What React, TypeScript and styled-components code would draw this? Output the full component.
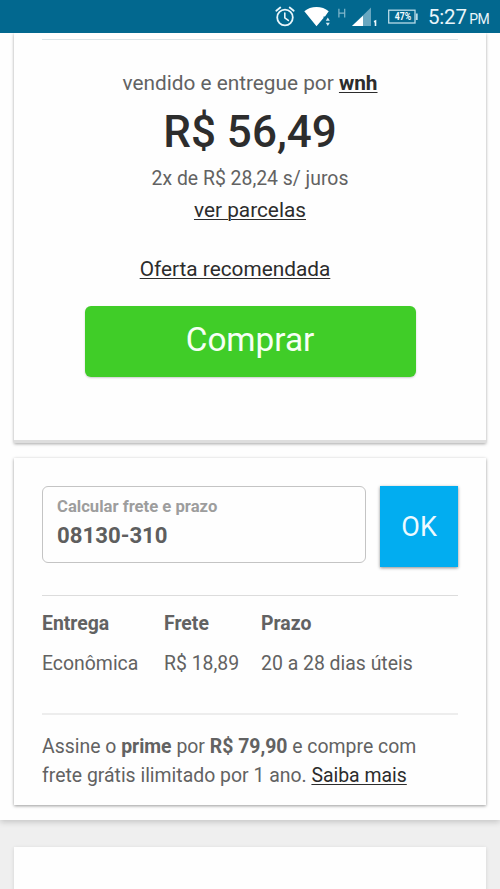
import React from 'react';
import styled, { createGlobalStyle } from 'styled-components';

const GlobalStyle = createGlobalStyle`
  *, *::before, *::after { box-sizing: border-box; }
  body {
    margin: 0;
    background: #efefef;
    font-family: Roboto, sans-serif;
    color: #626262;
    overflow: hidden;
  }
`;

const Screen = styled.div`
  width: 500px;
  height: 889px;
  display: flex;
  flex-direction: column;
  overflow: hidden;
`;

const StatusBar = styled.header`
  position: relative;
  z-index: 1;
  flex: none;
  height: 33px;
  background: #02688f;
  color: #e9f5fa;
  display: flex;
  justify-content: flex-end;
  align-items: flex-start;
  padding-right: 11px;
`;

const StatusIcons = styled.svg`
  display: block;
  width: 168px;
  height: 33px;
`;

const Clock = styled.div`
  font-size: 20.5px;
  line-height: 35px;
  width: 61px;
  white-space: nowrap;
  letter-spacing: -0.2px;
  small { font-size: 14px; margin-left: 2.5px; letter-spacing: -0.5px; }
`;

const Sheet = styled.main`
  flex: none;
  height: 787px;
  padding: 0 14px;
  background: #fefefe;
  box-shadow: 0 2px 6px rgba(0, 0, 0, 0.18);
`;

const OfferCard = styled.section`
  height: 410px;
  background: #fefefe;
  border-bottom: 3px solid #dedede;
  box-shadow: 0 1px 3px rgba(0, 0, 0, 0.35);
  padding: 6px 28px 0;
  display: flex;
  flex-direction: column;
  align-items: center;
`;

const ShippingCard = styled.section`
  height: 347px;
  margin-top: 15px;
  background: #fefefe;
  box-shadow: 0 1px 3px rgba(0, 0, 0, 0.4);
  padding: 28px 28px 0;
`;

const NextCard = styled.section`
  flex: none;
  height: 60px;
  margin: 27px 14px 0;
  background: #fefefe;
  box-shadow: 0 1px 4px rgba(0, 0, 0, 0.12);
`;

const Divider = styled.hr<{ $tone?: string; $size?: number; $gap?: number }>`
  align-self: stretch;
  margin: ${p => p.$gap ?? 0}px 0 0;
  border: 0;
  height: ${p => p.$size ?? 1}px;
  background: ${p => p.$tone ?? '#dcdcdc'};
`;

const Seller = styled.p`
  margin: 28px 0 0;
  font-size: 20.8px;
  line-height: 30px;
`;

const Link = styled.a<{ $bold?: boolean }>`
  color: #2c2c2c;
  font-weight: ${p => (p.$bold ? 700 : 400)};
  text-decoration: underline;
  text-decoration-thickness: 1px;
  text-underline-offset: 2px;
  text-decoration-skip-ink: auto;
`;

const Price = styled.div`
  margin-top: 4px;
  font-size: 44px;
  line-height: 60px;
  font-weight: 500;
  color: #2d2d2d;
`;

const Installments = styled.p`
  margin: 1px 0 0;
  font-size: 19.4px;
  line-height: 32px;
`;

const InstallmentsLink = styled.p`
  margin: 0;
  font-size: 20.8px;
  line-height: 31px;
`;

const OfferLabel = styled.div`
  margin: 28px 30px 0 0;
  font-size: 20.8px;
  line-height: 30px;
`;

const BuyButton = styled.button`
  margin-top: 22px;
  width: 331px;
  height: 71px;
  border: 0;
  border-radius: 6px;
  padding: 0 0 4px;
  background: #40cd28;
  box-shadow: 0 1px 2px rgba(0, 0, 0, 0.2);
  color: #f7fff5;
  font: 400 33.3px Roboto, sans-serif;
`;

const ZipForm = styled.div`
  display: flex;
  gap: 14px;
  align-items: flex-start;
`;

const ZipField = styled.label`
  width: 325px;
  height: 77px;
  border: 1px solid #c4c4c4;
  border-radius: 6px;
  padding: 10px 14px 0;
  font-weight: 700;
`;

const ZipCaption = styled.span`
  display: block;
  font-size: 16.65px;
  line-height: 20px;
  color: #9d9d9d;
`;

const ZipValue = styled.span`
  display: block;
  margin-top: 4px;
  font-size: 22.2px;
  line-height: 28px;
  color: #5e5e5e;
`;

const OkButton = styled.button`
  width: 78px;
  height: 81px;
  border: 0;
  padding: 0;
  background: #02adf0;
  box-shadow: 0 1px 3px rgba(0, 0, 0, 0.45);
  color: #eefaff;
  font: 400 27px Roboto, sans-serif;
`;

const Rates = styled.div`
  display: grid;
  grid-template-columns: 122px 97px 1fr;
  grid-auto-rows: 40px;
  padding-top: 8px;
  height: 117px;
  font-size: 19.42px;
  line-height: 40px;
  white-space: nowrap;
`;

const RateHead = styled.div`
  font-weight: 700;
`;

const Prime = styled.p`
  margin: 17px 0 0;
  font-size: 19.42px;
  line-height: 29px;
  white-space: nowrap;
`;

export default function App() {
  return (
    <>
      <GlobalStyle />
      <Screen>
        <StatusBar>
          <StatusIcons viewBox="260 0 168 33" fill="none">
            <g stroke="#e9f5fa" strokeWidth="1.8" strokeLinecap="round">
              <circle cx="285" cy="17.5" r="7.8" />
              <path d="M284.8 13v4.8l3.5 2.6" strokeWidth="1.6" />
              <path d="M276.3 10.8l4-3.3M293.7 10.8l-4-3.3" />
            </g>
            <path d="M304.3 11.3C310.5 5.6 322.5 5.6 328.700 11.3L325 16.5H323.5V18L316.5 26.3Z" fill="#fff" />
            <path d="M327.8 17.5l2 3.2h-4zM327.8 26l2-3.2h-4z" fill="#d5eaf3" />
            <path d="M338.9 8.8v8.8M344.7 8.8v8.8M338.9 13.2h5.800" stroke="#83b8cd" strokeWidth="1.2" />
            <path d="M371 7.5V26H352Z" fill="#69a7c0" />
            <path d="M363 15.8V26H352Z" fill="#fff" />
            <path d="M374 21.7l1.5-.7V26" stroke="#eef8fb" strokeWidth="1.6" />
            <rect x="388.7" y="10.2" width="26.3" height="12.8" stroke="#b9dce8" strokeWidth="1.3" />
            <path d="M416.8 13.5v6.5" stroke="#b9dce8" strokeWidth="1.8" />
            <text x="403" y="20.2" textAnchor="middle" fill="#f4fbfd" fontFamily="Roboto, sans-serif" fontSize="10" fontWeight="700" textLength="16.500" lengthAdjust="spacingAndGlyphs">47%</text>
          </StatusIcons>
          <Clock>5:27<small>PM</small></Clock>
        </StatusBar>
        <Sheet>
          <OfferCard>
            <Divider $tone="#dbe4e8" />
            <Seller>vendido e entregue por <Link $bold>wnh</Link></Seller>
            <Price>R$ 56,49</Price>
            <Installments>2x de R$ 28,24 s/ juros</Installments>
            <InstallmentsLink><Link>ver parcelas</Link></InstallmentsLink>
            <OfferLabel><Link>Oferta recomendada</Link></OfferLabel>
            <BuyButton>Comprar</BuyButton>
          </OfferCard>
          <ShippingCard>
            <ZipForm>
              <ZipField>
                <ZipCaption>Calcular frete e prazo</ZipCaption>
                <ZipValue>08130-310</ZipValue>
              </ZipField>
              <OkButton>OK</OkButton>
            </ZipForm>
            <Divider $gap={28} />
            <Rates>
              <RateHead>Entrega</RateHead>
              <RateHead>Frete</RateHead>
              <RateHead>Prazo</RateHead>
              <div>Econômica</div>
              <div>R$ 18,89</div>
              <div>20 a 28 dias úteis</div>
            </Rates>
            <Divider $tone="#ededed" $size={2} />
            <Prime>
              Assine o <b>prime</b> por <b>R$ 79,90</b> e compre com<br />
              frete grátis ilimitado por 1 ano. <Link>Saiba mais</Link>
            </Prime>
          </ShippingCard>
        </Sheet>
        <NextCard />
      </Screen>
    </>
  );
}
